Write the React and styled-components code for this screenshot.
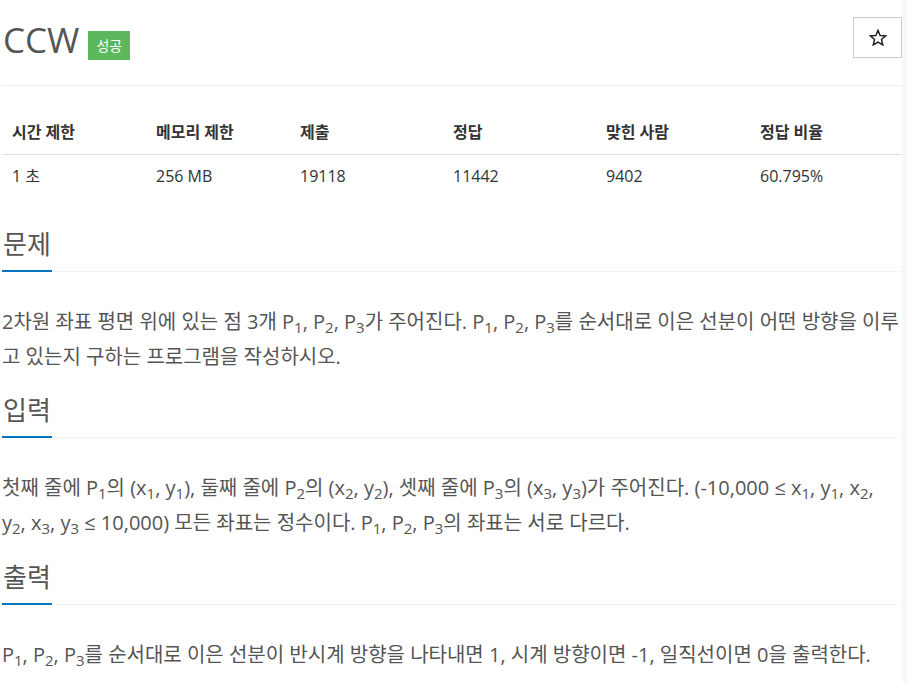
import styled, { createGlobalStyle } from 'styled-components'

const GlobalStyle = createGlobalStyle`
  html, body {
    margin: 0;
    padding: 0;
  }
  body {
    background: linear-gradient(to right, #fff 902px, #f7f7f7 902px);
    font-family: "Open Sans", "Noto Sans CJK KR", sans-serif;
    color: #333;
    font-size: 16px;
  }
`

const Page = styled.div`
  width: 900px;
  margin-left: 2px;
  background: #fff;
`

const TitleBar = styled.div`
  display: flex;
  align-items: flex-start;
  justify-content: space-between;
  padding-top: 17px;
  padding-bottom: 25px;
  border-bottom: 1px solid #eee;
`

const TitleGroup = styled.div`
  display: flex;
  align-items: center;
  gap: 9px;
  padding-top: 2px;
`

const Title = styled.h1`
  margin: 0;
  font-size: 35px;
  font-weight: 400;
  line-height: 40px;
  color: #555;
  padding-left: 1px;
`

const Badge = styled.span`
  display: inline-block;
  height: 29px;
  line-height: 29px;
  padding: 0 8px;
  margin-top: 12px;
  background: #5cb85c;
  color: #fff;
  font-size: 14px;
  font-weight: 400;
`

const StarButton = styled.button`
  display: flex;
  align-items: center;
  justify-content: center;
  width: 49px;
  height: 41px;
  border: 1px solid #ccc;
  background: #fff;
  padding: 0;
`

const Table = styled.div`
  display: grid;
  grid-template-columns: 144px 144px 153px 153px 154px 1fr;
  margin-top: 28px;
  font-size: 16px;
`

const HeadCell = styled.div`
  padding: 8px 10px 12px;
  line-height: 20px;
  font-weight: 700;
  border-bottom: 1px solid #ddd;
`

const Cell = styled.div`
  padding: 11px 10px 9px;
  line-height: 20px;
`

const Section = styled.section`
  margin-top: ${(p) => p.$top}px;
`

const Headline = styled.div`
  border-bottom: 1px dotted #e4e9f0;
  margin-bottom: 32px;
`

const HeadlineTitle = styled.h2`
  display: inline-block;
  margin: 0 0 -1px;
  padding: 0 1px 9px;
  font-size: 26px;
  font-weight: 400;
  line-height: 34px;
  color: #555;
  border-bottom: 2px solid #0076c0;
`

const Text = styled.p`
  margin: 0;
  font-size: 20px;
  line-height: 35px;
  color: #555;
`

const Sub = styled.sub`
  font-size: 75%;
  line-height: 0;
  position: relative;
  vertical-align: baseline;
  bottom: -0.25em;
`

const P = ({ n }) => (
  <>
    P<Sub>{n}</Sub>
  </>
)

const V = ({ c, n }) => (
  <>
    {c}
    <Sub>{n}</Sub>
  </>
)

const StarIcon = () => (
  <svg width="18" height="17" viewBox="0 0 24 23" fill="none">
    <path
      d="M12 1.8l2.9 6.9 7.4.6-5.6 4.9 1.7 7.3L12 17.6l-6.4 3.9 1.7-7.3-5.6-4.9 7.4-.6z"
      stroke="#222"
      strokeWidth="2"
      strokeLinejoin="miter"
    />
  </svg>
)

const stats = [
  ['시간 제한', '1 초'],
  ['메모리 제한', '256 MB'],
  ['제출', '19118'],
  ['정답', '11442'],
  ['맞힌 사람', '9402'],
  ['정답 비율', '60.795%'],
]

export default function App() {
  return (
    <>
      <GlobalStyle />
      <Page>
        <TitleBar>
          <TitleGroup>
            <Title>CCW</Title>
            <Badge>성공</Badge>
          </TitleGroup>
          <StarButton>
            <StarIcon />
          </StarButton>
        </TitleBar>

        <Table>
          {stats.map(([h]) => (
            <HeadCell key={h}>{h}</HeadCell>
          ))}
          {stats.map(([h, v]) => (
            <Cell key={h}>{v}</Cell>
          ))}
        </Table>

        <Section $top={32}>
          <Headline>
            <HeadlineTitle>문제</HeadlineTitle>
          </Headline>
          <Text>
            2차원 좌표 평면 위에 있는 점 3개 <P n={1} />, <P n={2} />, <P n={3} />가 주어진다.{' '}
            <P n={1} />, <P n={2} />, <P n={3} />를 순서대로 이은 선분이 어떤 방향을 이루고 있는지
            구하는 프로그램을 작성하시오.
          </Text>
        </Section>

        <Section $top={19}>
          <Headline>
            <HeadlineTitle>입력</HeadlineTitle>
          </Headline>
          <Text>
            첫째 줄에 <P n={1} />의 (<V c="x" n={1} />, <V c="y" n={1} />), 둘째 줄에 <P n={2} />의 (
            <V c="x" n={2} />, <V c="y" n={2} />), 셋째 줄에 <P n={3} />의 (<V c="x" n={3} />,{' '}
            <V c="y" n={3} />)가 주어진다. (-10,000 ≤ <V c="x" n={1} />, <V c="y" n={1} />,{' '}
            <V c="x" n={2} />, <V c="y" n={2} />, <V c="x" n={3} />, <V c="y" n={3} /> ≤ 10,000) 모든
            좌표는 정수이다. <P n={1} />, <P n={2} />, <P n={3} />의 좌표는 서로 다르다.
          </Text>
        </Section>

        <Section $top={20}>
          <Headline>
            <HeadlineTitle>출력</HeadlineTitle>
          </Headline>
          <Text>
            <P n={1} />, <P n={2} />, <P n={3} />를 순서대로 이은 선분이 반시계 방향을 나타내면 1, 시계
            방향이면 -1, 일직선이면 0을 출력한다.
          </Text>
        </Section>
      </Page>
    </>
  )
}
